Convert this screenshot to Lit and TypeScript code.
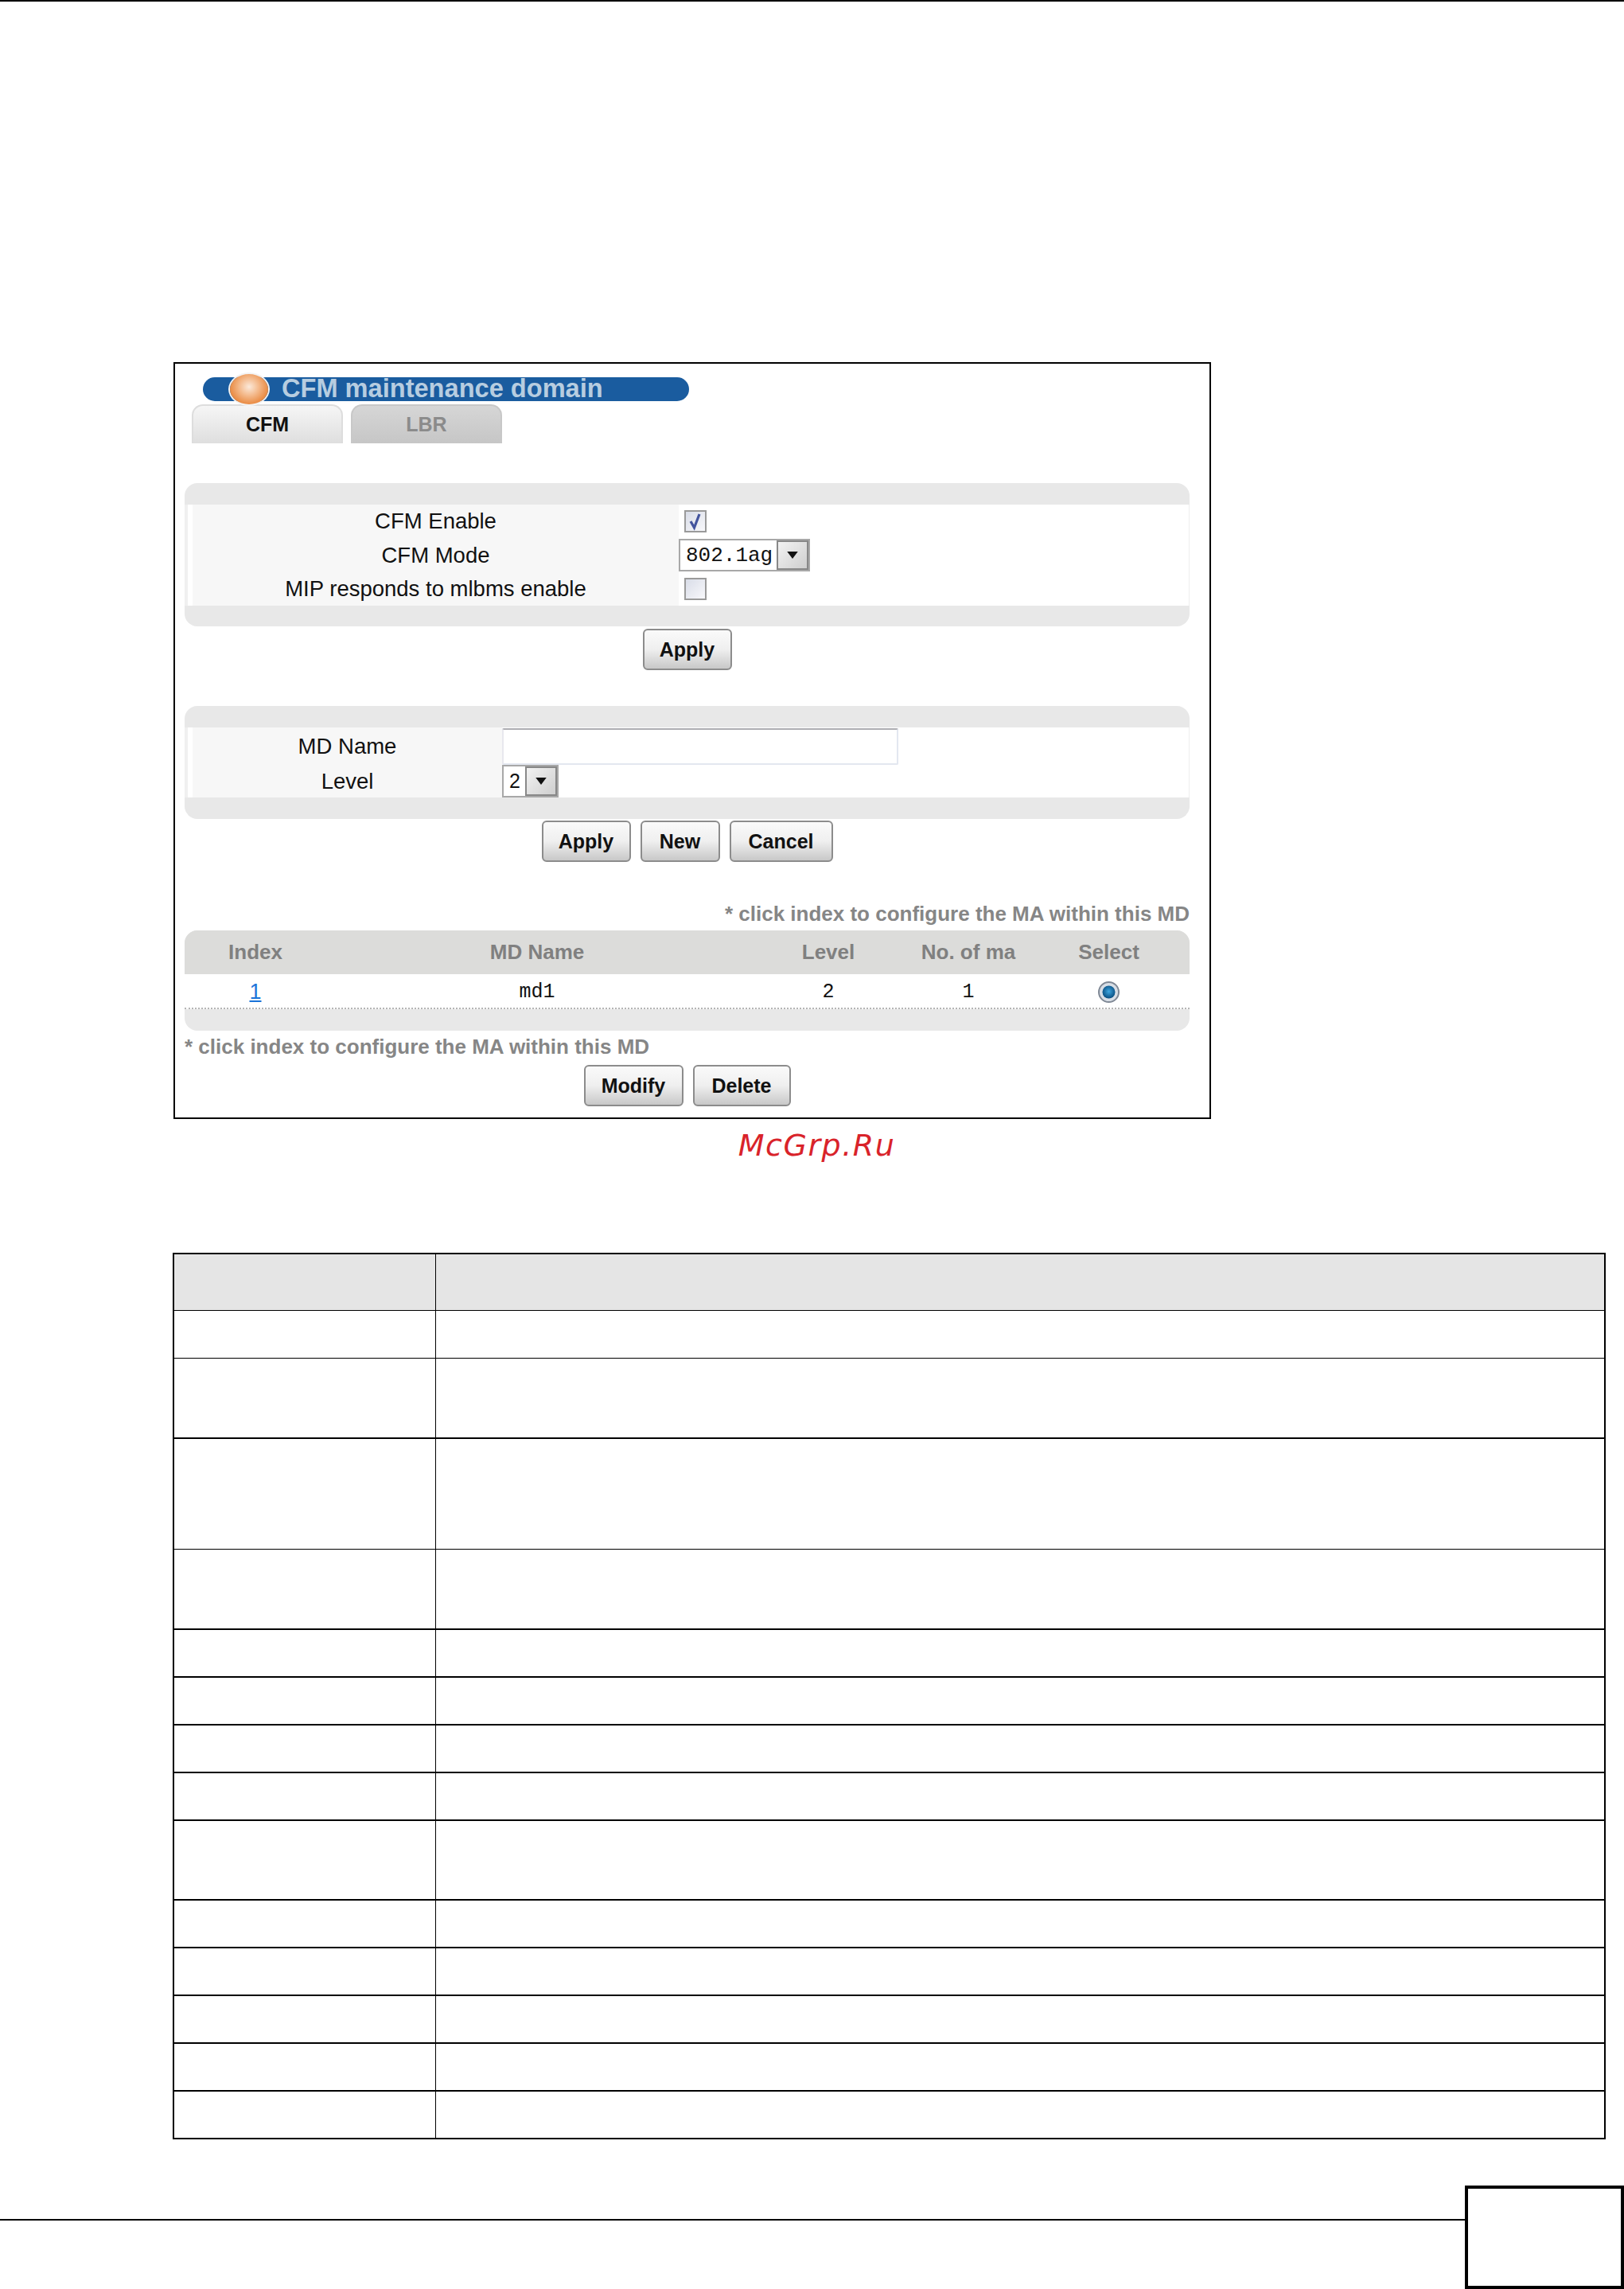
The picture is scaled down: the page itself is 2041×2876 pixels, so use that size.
import { LitElement, html, css } from "lit";
import { customElement } from "lit/decorators.js";

const ROWS = [
  { h: 60, thin: true }, { h: 101, thin: false }, { h: 139, thin: true }, { h: 101, thin: false },
  { h: 60, thin: false }, { h: 60, thin: false }, { h: 60, thin: false }, { h: 60, thin: false },
  { h: 100, thin: false }, { h: 60, thin: false }, { h: 60, thin: false }, { h: 60, thin: false },
  { h: 60, thin: false }, { h: 58, thin: false },
];

const arrow = html`<svg class="arrow" viewBox="0 0 12 8" aria-hidden="true"><path d="M0 0H12L6 8Z" fill="#111"/></svg>`;

@customElement("app-root")
export class AppRoot extends LitElement {
  static styles = css`
    :host { display: block; width: 2041px; background: #fff; font-family: "Liberation Sans", Arial, sans-serif; color: #111; }
    .rule { height: 2px; background: #000; }
    .frame { box-sizing: border-box; width: 1304px; height: 951px; margin: 453px 0 0 218px; border: 2px solid #000; padding-top: 17px; }
    .title { position: relative; box-sizing: border-box; width: 611px; height: 30px; margin-left: 35px; padding-left: 99px; border-radius: 15px; background: #1a5c9f; color: #b7cde0; font-size: 32.6px; font-weight: 700; line-height: 28px; white-space: nowrap; }
    .orb { position: absolute; left: 34px; top: -4px; width: 48px; height: 38px; border-radius: 50%; background: radial-gradient(ellipse at 50% 42%, #fbe9da 0%, #f4bb8e 35%, #e8853a 75%, #d86f22 100%); box-shadow: 0 0 0 2px #f3f3f3; }
    .tabs { display: flex; gap: 10px; margin: 4px 0 0 21px; }
    .tab { box-sizing: border-box; width: 190px; height: 49px; display: flex; align-items: center; justify-content: center; border: 2px solid #ddd; border-bottom: 0; border-radius: 14px 14px 0 0; font-size: 25px; font-weight: 700; }
    .tab.on { background: linear-gradient(#f6f6f6, #dedede); color: #111; }
    .tab.off { background: linear-gradient(#d6d6d6, #c6c6c6); color: #8b8b8b; border-color: #c8c8c8; }
    .panel { width: 1263px; margin-left: 12px; border-radius: 16px; background: #e8e8e8; box-sizing: border-box; }
    .p1 { height: 180px; margin-top: 50px; padding: 27px 0 26px; }
    .p2 { height: 142px; margin-top: 45px; padding: 27px 0; }
    .body { height: 100%; box-sizing: border-box; border-left: 4px solid #f0f0f0; border-right: 1px solid #eee; padding-left: 6px; padding-right: 4px; background: #fff; display: grid; font-size: 27.5px; }
    .p1 .body { grid-template-columns: 611px 1fr; grid-template-rows: 42px 43px 42px; }
    .p2 .body { grid-template-columns: 389px 1fr; grid-template-rows: 47px 41px; }
    .label { background: #f7f7f7; display: flex; align-items: center; justify-content: center; white-space: nowrap; }
    .value { display: flex; align-items: center; }
    .check { box-sizing: border-box; width: 28px; height: 28px; margin-left: 7px; border: 2px solid #9a9a9a; background: linear-gradient(135deg, #d9dde8, #f8f8fb); display: block; }
    .select { box-sizing: border-box; height: 41px; display: flex; align-items: stretch; border: 2px solid #a8a8a8; background: #fff; font-family: "Liberation Mono", monospace; font-size: 26px; }
    .select .text { padding: 0 5px 0 7px; display: flex; align-items: center; }
    .select.sans { font-family: "Liberation Sans", sans-serif; font-size: 25px; }
    .select.sans .text { padding: 0 6px 0 7px; }
    .select .btn { width: 36px; border: 2px solid #888; background: linear-gradient(135deg, #f2f2f2, #cfcfcf); display: flex; align-items: center; justify-content: center; }
    .arrow { width: 14px; height: 9px; }
    .input { box-sizing: border-box; width: 498px; height: 46px; border: 2px solid #e3e7f0; border-top-color: #adadb2; border-left-color: #e8e8ee; border-radius: 2px; background: #fff; }
    .actions { display: flex; justify-content: center; gap: 12px; width: 1263px; margin-left: 12px; }
    .a1 { margin-top: 3px; }
    .a2 { margin-top: 2px; }
    .button { box-sizing: border-box; height: 52px; display: flex; align-items: center; justify-content: center; border: 2px solid #8c8c8c; border-radius: 6px; background: linear-gradient(#fafafa, #efefef 50%, #c8c8c8); font-size: 25px; font-weight: 700; color: #111; }
    .note { width: 1263px; margin-left: 12px; font-size: 26px; font-weight: 700; color: #868686; white-space: nowrap; }
    .note.right { text-align: right; margin-top: 47px; line-height: 36px; height: 36px; }
    .note.left { line-height: 40px; height: 43px; }
    .p3 { height: 126px; margin-top: 3px; overflow: hidden; padding-bottom: 27px; }
    .cols { display: grid; grid-template-columns: 178px 530px 202px 150px 203px; align-items: center; justify-items: center; }
    .head { height: 55px; background: #dcdcda; color: #808080; font-size: 26px; font-weight: 700; }
    .row { height: 44px; box-sizing: border-box; padding-top: 2px; background: #fff; border-bottom: 2px dotted #b5b5b5; font-family: "Liberation Mono", monospace; font-size: 25px; }
    .row a { color: #1a73d9; font-family: "Liberation Sans", sans-serif; font-size: 27px; text-decoration: underline; }
    .radio { width: 27px; height: 27px; display: block; }
    .mark { box-sizing: border-box; width: 2041px; margin-top: 11px; padding-left: 12px; font-family: "DejaVu Sans", sans-serif; font-style: italic; font-size: 38px; letter-spacing: 1.5px; color: #d9232a; text-align: center; line-height: 44px; height: 44px; }
    .table { box-sizing: border-box; width: 1801px; margin: 113px 0 0 217px; border: 2px solid #000; }
    .tr { box-sizing: border-box; display: grid; grid-template-columns: 329px 1fr; border-bottom: 2px solid #000; }
    .tr.thin { border-bottom-width: 1px; }
    .tr:last-child { border-bottom: 0; }
    .tr.th { background: #e5e5e5; }
    .td { border-right: 1px solid #000; }
    .footer { display: flex; margin-top: 58px; height: 130px; }
    .line { flex: 1; height: 2px; margin-top: 42px; background: #000; }
    .pagebox { box-sizing: border-box; width: 200px; height: 130px; border: 4px solid #000; }
  `;

  render() {
    return html`
      <div class="rule"></div>
      <section class="frame">
        <div class="title"><span class="orb"></span>CFM maintenance domain</div>
        <div class="tabs"><div class="tab on">CFM</div><div class="tab off">LBR</div></div>
        <div class="panel p1"><div class="body">
          <div class="label">CFM Enable</div>
          <div class="value"><svg class="check" viewBox="0 0 24 24" aria-hidden="true"><path d="M6 12l4.5 8L17 3" fill="none" stroke="#43549e" stroke-width="3.2"/></svg></div>
          <div class="label">CFM Mode</div>
          <div class="value"><div class="select"><span class="text">802.1ag</span><span class="btn">${arrow}</span></div></div>
          <div class="label">MIP responds to mlbms enable</div>
          <div class="value"><span class="check"></span></div>
        </div></div>
        <div class="actions a1"><div class="button" style="width:112px">Apply</div></div>
        <div class="panel p2"><div class="body">
          <div class="label">MD Name</div>
          <div class="value"><div class="input"></div></div>
          <div class="label">Level</div>
          <div class="value"><div class="select sans"><span class="text">2</span><span class="btn">${arrow}</span></div></div>
        </div></div>
        <div class="actions a2">
          <div class="button" style="width:112px">Apply</div>
          <div class="button" style="width:100px">New</div>
          <div class="button" style="width:130px">Cancel</div>
        </div>
        <div class="note right">* click index to configure the MA within this MD</div>
        <div class="panel p3">
          <div class="cols head"><span>Index</span><span>MD Name</span><span>Level</span><span>No. of ma</span><span>Select</span></div>
          <div class="cols row"><a href="#">1</a><span>md1</span><span>2</span><span>1</span>
            <svg class="radio" viewBox="0 0 27 27" aria-hidden="true">
              <defs><radialGradient id="rd" cx="50%" cy="45%" r="55%"><stop offset="0" stop-color="#3ea6e0"/><stop offset="1" stop-color="#084d80"/></radialGradient></defs>
              <circle cx="13.5" cy="13.5" r="12.5" fill="#d8dee6" stroke="#7f8895" stroke-width="2"/>
              <circle cx="13.5" cy="13.5" r="8" fill="url(#rd)"/>
            </svg>
          </div>
        </div>
        <div class="note left">* click index to configure the MA within this MD</div>
        <div class="actions">
          <div class="button" style="width:125px">Modify</div>
          <div class="button" style="width:123px">Delete</div>
        </div>
      </section>
      <div class="mark">McGrp.Ru</div>
      <div class="table">
        <div class="tr th thin" style="height:71px"><div class="td"></div><div></div></div>
        ${ROWS.map((r) => html`<div class="tr ${r.thin ? "thin" : ""}" style="height:${r.h}px"><div class="td"></div><div></div></div>`)}
      </div>
      <div class="footer"><div class="line"></div><div class="pagebox"></div></div>
    `;
  }
}
